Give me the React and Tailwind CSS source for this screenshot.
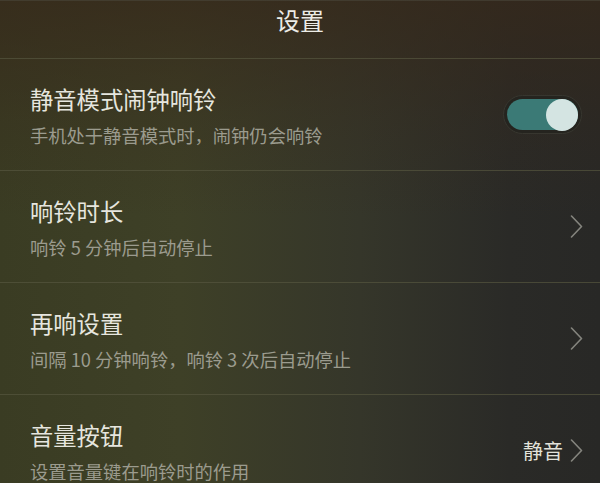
import React from "react";

const font = { fontFamily: '"Noto Sans CJK SC", "Noto Sans", sans-serif' };

function Chevron() {
  return (
    <svg width="13" height="23" viewBox="0 0 13 23" className="shrink-0">
      <polyline points="1.5,1 11.5,11.5 1.5,22" fill="none" stroke="#85857e" strokeWidth="1.6" strokeLinecap="round" strokeLinejoin="round" />
    </svg>
  );
}

function Toggle() {
  return (
    <div className="w-[79px] h-[39px] rounded-full bg-[#25241f] border border-[#37362f] p-[3px] shrink-0">
      <div className="w-full h-full rounded-full bg-[#3b7a76] flex justify-end items-center">
        <div className="w-[32px] h-[32px] rounded-full bg-[#d4e4e2]" />
      </div>
    </div>
  );
}

function Row({ title, sub, right }) {
  return (
    <div className="h-[112px] border-t border-[#55553f]/70 flex items-center pl-[30px] pr-[17px] shrink-0">
      <div className="flex-1 flex flex-col gap-[10px] pt-[3px]">
        <div className="text-[23.3px] leading-[28px] text-[#e6e6df]">{title}</div>
        <div className="text-[18.3px] leading-[24px] text-[#9b9b8e]">{sub}</div>
      </div>
      {right}
    </div>
  );
}

export default function App() {
  return (
    <div
      style={font}
      className="w-[600px] h-[483px] overflow-hidden flex flex-col bg-[linear-gradient(180deg,rgba(54,40,26,0.75)_0%,rgba(54,40,26,0.25)_25%,transparent_45%),linear-gradient(90deg,#3a3c23_0%,#3e4027_30%,#35362a_60%,#2a2a27_85%,#282826_100%)]"
    >
      <div className="h-[58px] shrink-0 border-t border-[#4a463a]/60 flex justify-center pt-[3px]">
        <div className="text-[24px] leading-[32px] text-[#ecece6]">设置</div>
      </div>
      <Row
        title="静音模式闹钟响铃"
        sub="手机处于静音模式时，闹钟仍会响铃"
        right={<div className="pr-[1px]"><Toggle /></div>}
      />
      <Row title="响铃时长" sub="响铃 5 分钟后自动停止" right={<Chevron />} />
      <Row title="再响设置" sub="间隔 10 分钟响铃，响铃 3 次后自动停止" right={<Chevron />} />
      <Row
        title="音量按钮"
        sub="设置音量键在响铃时的作用"
        right={
          <div className="flex items-center gap-[7px]">
            <span className="text-[20px] leading-[24px] text-[#e2e2da]">静音</span>
            <Chevron />
          </div>
        }
      />
    </div>
  );
}
